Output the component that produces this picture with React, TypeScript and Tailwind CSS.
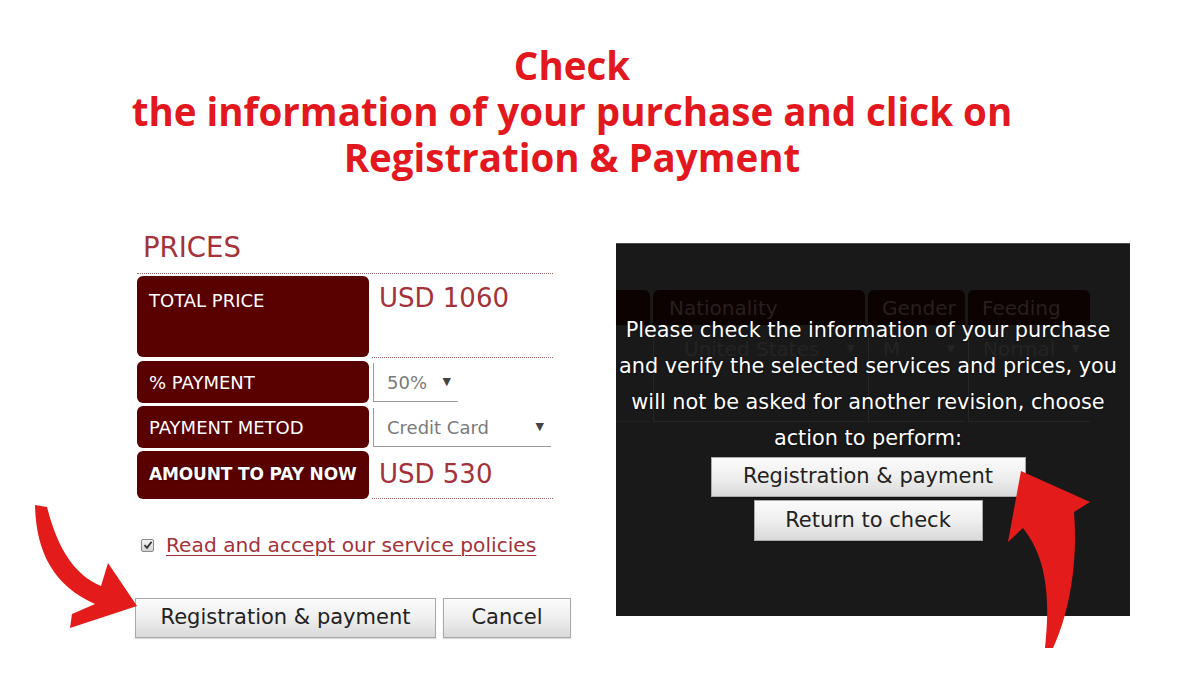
import React from "react";

const ui = "font-['DejaVu_Sans','Liberation_Sans',Arial,sans-serif]";

function Btn({ w, h, children }: { w: string; h: string; children: React.ReactNode }) {
  return (
    <div
      className={`${w} ${h} flex items-center justify-center border border-[#a9a9a9] bg-gradient-to-b from-[#fbfbfb] via-[#efefef] to-[#d9d9d9] text-[#222] text-[21px] shadow-[0_1px_1px_rgba(0,0,0,0.15)]`}
    >
      {children}
    </div>
  );
}

export default function App() {
  return (
    <div className={`relative w-[1200px] h-[700px] bg-white overflow-hidden ${ui}`}>
      {/* Title */}
      <div className="w-[1144px] pt-[42px] text-center text-[#e3171e] font-bold text-[38.5px] leading-[46px] font-['Open_Sans',sans-serif]">
        <div>Check</div>
        <div>the information of your purchase and click on</div>
        <div>Registration &amp; Payment</div>
      </div>

      <div className="flex pl-[135px] pt-[52px] gap-[45px]">
        {/* Left column */}
        <div className="w-[436px] flex flex-col">
          <div className="pl-[8px] text-[27.5px] leading-[30px] text-[#a3323a]">PRICES</div>
          <div className="ml-[2px] w-[416px] mt-[11px] border-t border-dotted border-[#a06a6a]" />
          <div className="ml-[2px] w-[416px] mt-[2px] flex flex-col gap-[3px]">
            <div className="flex h-[82px] gap-[3px]">
              <div className="w-[232px] h-[81px] rounded-[6px] bg-[#590000] text-white text-[18px] pl-[12px] pt-[14px] leading-[22px]">
                TOTAL PRICE
              </div>
              <div className="flex-1 border-b border-dotted border-[#a06a6a] pl-[7px] pt-[6px] text-[26px] leading-[32px] text-[#a3323a]">
                USD 1060
              </div>
            </div>
            <div className="flex h-[42px] gap-[3px]">
              <div className="w-[232px] rounded-[6px] bg-[#590000] text-white text-[18px] pl-[12px] flex items-center">
                % PAYMENT
              </div>
              <div className="flex-1">
                <div className="ml-[1px] mt-[2px] w-[85px] h-[39px] border-l border-b border-[#9a9a9a] flex items-center justify-between pl-[13px] pr-[7px] text-[#7a7a7a] text-[18px]">
                  <span>50%</span>
                  <span className="text-[11px] text-[#444]">▼</span>
                </div>
              </div>
            </div>
            <div className="flex h-[42px] gap-[3px]">
              <div className="w-[232px] rounded-[6px] bg-[#590000] text-white text-[18px] pl-[12px] flex items-center">
                PAYMENT METOD
              </div>
              <div className="flex-1">
                <div className="ml-[1px] mt-[2px] w-[178px] h-[39px] border-l border-b border-[#9a9a9a] flex items-center justify-between pl-[13px] pr-[7px] text-[#7a7a7a] text-[18px]">
                  <span>Credit Card</span>
                  <span className="text-[11px] text-[#444]">▼</span>
                </div>
              </div>
            </div>
            <div className="flex h-[48px] gap-[3px]">
              <div className="w-[232px] rounded-[6px] bg-[#590000] text-white text-[17px] font-bold tracking-[-0.15px] pl-[12px] flex items-center [text-shadow:0_0_2px_rgba(0,0,0,0.6)]">
                AMOUNT TO PAY NOW
              </div>
              <div className="flex-1 border-b border-dotted border-[#a06a6a] pl-[7px] pt-[7px] text-[26px] leading-[32px] text-[#a3323a]">
                USD 530
              </div>
            </div>
          </div>

          <div className="mt-[34px] h-[24px] flex items-center">
            <div className="ml-[6px] w-[13px] h-[13px] rounded-[2px] border border-[#8a8a8a] bg-gradient-to-b from-[#f4f4f4] to-[#d4d4d4] flex items-center justify-center">
              <svg width="10" height="10" viewBox="0 0 10 10">
                <path d="M1.5 5.2 L4 7.8 L8.6 1.8" stroke="#333" strokeWidth="1.8" fill="none" />
              </svg>
            </div>
            <span className="ml-[12px] text-[20.2px] text-[#a3323a] underline underline-offset-[3px] decoration-1">
              Read and accept our service policies
            </span>
          </div>

          <div className="mt-[41px] flex gap-[7px]">
            <Btn w="w-[301px]" h="h-[40px]">Registration &amp; payment</Btn>
            <Btn w="w-[128px]" h="h-[40px]">Cancel</Btn>
          </div>
        </div>

        {/* Right dark panel */}
        <div className="relative mt-[11px] w-[514px] h-[373px] bg-[#191919] border-t border-[#4a4a4a]">
          <div className="mt-[46px] flex gap-[3px] h-[35px] text-[20px] text-[#2a1f1f]">
            <div className="w-[34px] rounded-tr-[6px] bg-[#0c0202]" />
            <div className="w-[212px] rounded-t-[6px] bg-[#0c0202] pl-[16px] flex items-center">Nationality</div>
            <div className="w-[97px] rounded-t-[6px] bg-[#0c0202] pl-[14px] flex items-center">Gender</div>
            <div className="w-[122px] rounded-t-[6px] bg-[#0c0202] pl-[14px] flex items-center">Feeding</div>
          </div>
          <div className="flex gap-[3px] h-[97px] text-[20px] leading-[16px] text-[#242424]">
            <div className="w-[34px] border-b border-[#222]" />
            <div className="w-[212px] border-l border-b border-[#262626] flex items-start pt-[16px] justify-between pl-[30px] pr-[10px]">
              <span>United States</span>
              <span className="text-[11px]">▼</span>
            </div>
            <div className="w-[97px] border-l border-b border-[#262626] flex items-start pt-[16px] justify-between pl-[14px] pr-[10px]">
              <span>M</span>
              <span className="text-[11px]">▼</span>
            </div>
            <div className="w-[122px] border-l border-b border-[#262626] flex items-start pt-[16px] justify-between pl-[14px] pr-[10px]">
              <span>Normal</span>
              <span className="text-[11px]">▼</span>
            </div>
          </div>

          <div className="absolute left-0 top-[68px] w-[504px] flex flex-col items-center">
            <div className="text-center text-white text-[20.8px] leading-[36px] whitespace-nowrap [text-shadow:0_0_2px_rgba(0,0,0,0.9)]">
              Please check the information of your purchase
              <br />
              and verify the selected services and prices, you
              <br />
              will not be asked for another revision, choose
              <br />
              action to perform:
            </div>
            <div className="mt-[1px] flex flex-col items-center gap-[3px]">
              <Btn w="w-[315px]" h="h-[40px]">Registration &amp; payment</Btn>
              <Btn w="w-[229px]" h="h-[41px]">Return to check</Btn>
            </div>
          </div>
        </div>
      </div>

      {/* Arrows */}
      <svg className="absolute left-0 top-0 pointer-events-none" width="1200" height="700" viewBox="0 0 1200 700">
        <path
          d="M35 505 C36 550 52 585 95 604 L72 614 L70 628 L137 606 L108 563 L101 586 C75 575 58 550 47 507 Z"
          fill="#e41b1b"
        />
        <path
          d="M1045 648 C1050 600 1048 560 1023 528 L1008 542 L1021 471 L1090 502 L1074 512 C1078 560 1070 612 1053 648 Z"
          fill="#e41b1b"
        />
      </svg>
    </div>
  );
}
